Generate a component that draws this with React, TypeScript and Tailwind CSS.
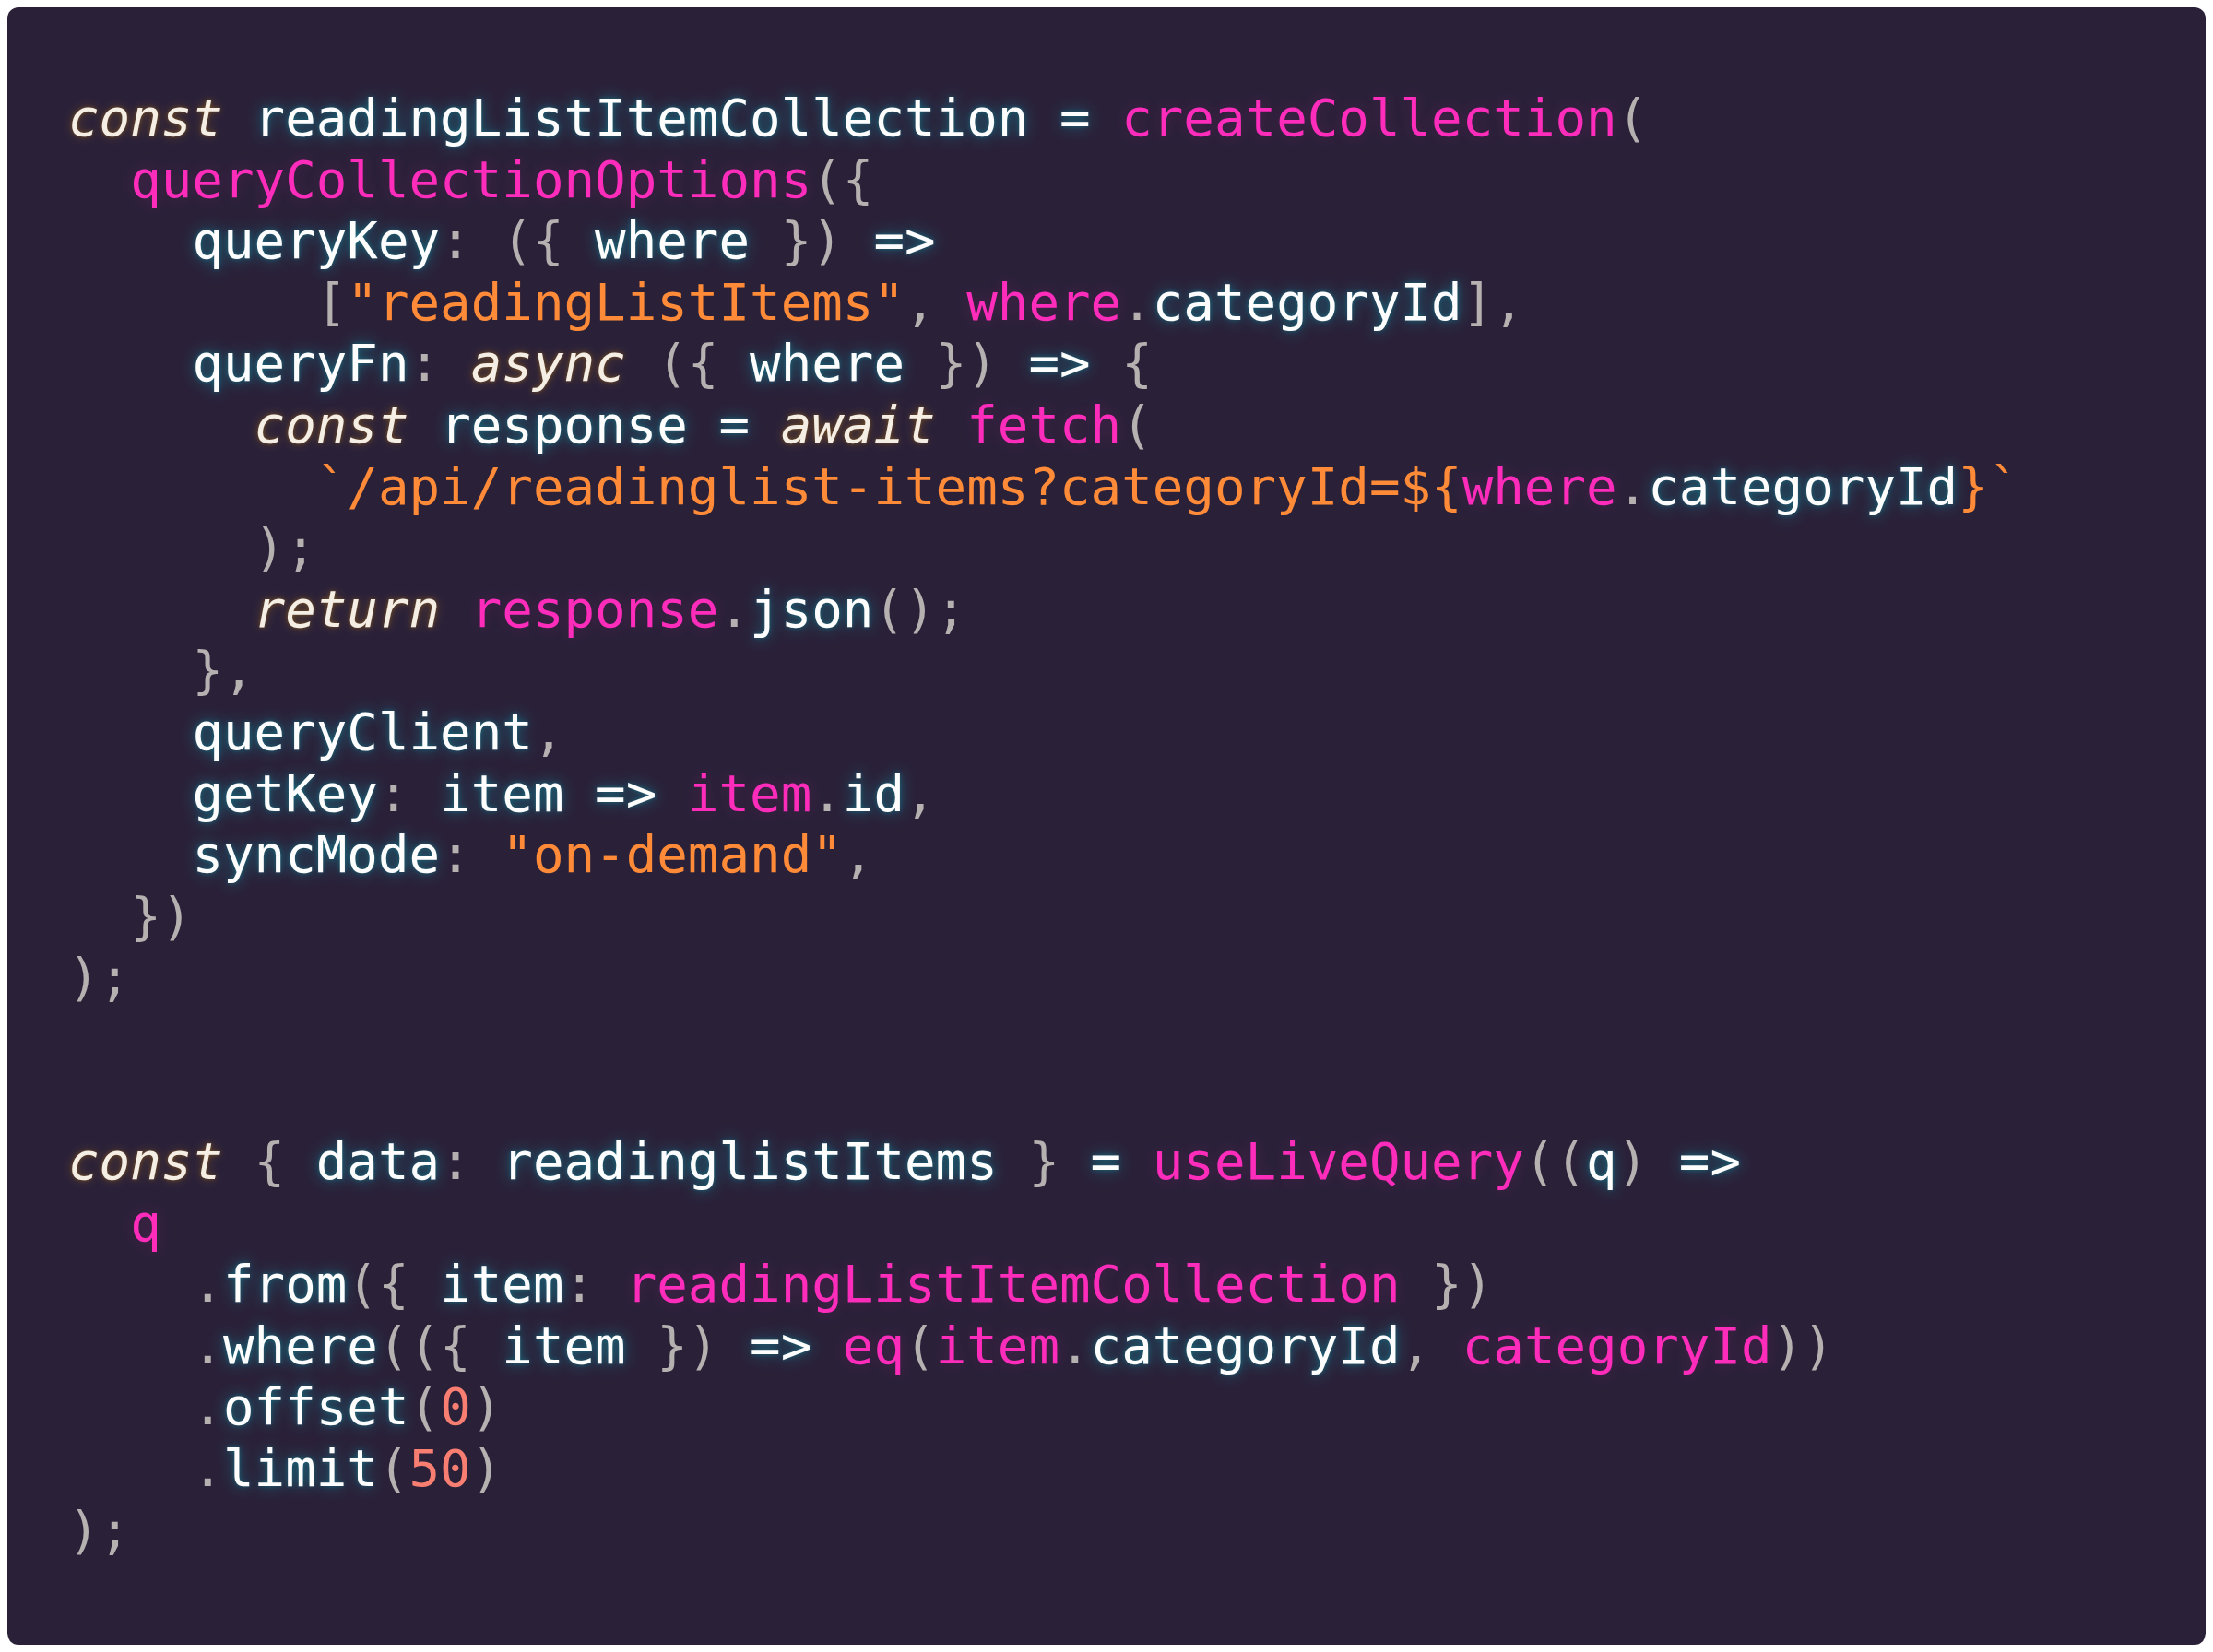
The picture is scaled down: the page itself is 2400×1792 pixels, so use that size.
type Kind = "k" | "v" | "f" | "s" | "p" | "n" | "_";
type Tok = [Kind, string];

const kindClass: Record<Kind, string> = {
  k: "italic text-[#f4eee4] [text-shadow:0_0_4px_rgba(243,159,5,0.3),0_0_12px_rgba(243,159,5,0.28)]",
  v: "text-[#fdfdfd] [text-shadow:0_0_5px_rgba(3,237,249,0.25),0_0_16px_rgba(3,237,249,0.4)]",
  f: "text-[#fe2cbb] [text-shadow:0_0_16px_rgba(254,44,187,0.18)]",
  s: "text-[#ff8b39]",
  p: "text-[#b6b1b1]",
  n: "text-[#f97e72]",
  _: "",
};

const sp = (n = 1): Tok => ["_", " ".repeat(n)];

const lines: Tok[][] = [
  [["k", "const"], sp(), ["v", "readingListItemCollection"], sp(), ["v", "="], sp(), ["f", "createCollection"], ["p", "("]],
  [sp(2), ["f", "queryCollectionOptions"], ["p", "({"]],
  [sp(4), ["v", "queryKey"], ["p", ":"], sp(), ["p", "({"], sp(), ["v", "where"], sp(), ["p", "})"], sp(), ["v", "=>"]],
  [sp(8), ["p", "["], ["s", '"readingListItems"'], ["p", ","], sp(), ["f", "where"], ["p", "."], ["v", "categoryId"], ["p", "],"]],
  [sp(4), ["v", "queryFn"], ["p", ":"], sp(), ["k", "async"], sp(), ["p", "({"], sp(), ["v", "where"], sp(), ["p", "})"], sp(), ["v", "=>"], sp(), ["p", "{"]],
  [sp(6), ["k", "const"], sp(), ["v", "response"], sp(), ["v", "="], sp(), ["k", "await"], sp(), ["f", "fetch"], ["p", "("]],
  [sp(8), ["s", "`/api/readinglist-items?categoryId=${"], ["f", "where"], ["p", "."], ["v", "categoryId"], ["s", "}`"]],
  [sp(6), ["p", ");"]],
  [sp(6), ["k", "return"], sp(), ["f", "response"], ["p", "."], ["v", "json"], ["p", "();"]],
  [sp(4), ["p", "},"]],
  [sp(4), ["v", "queryClient"], ["p", ","]],
  [sp(4), ["v", "getKey"], ["p", ":"], sp(), ["v", "item"], sp(), ["v", "=>"], sp(), ["f", "item"], ["p", "."], ["v", "id"], ["p", ","]],
  [sp(4), ["v", "syncMode"], ["p", ":"], sp(), ["s", '"on-demand"'], ["p", ","]],
  [sp(2), ["p", "})"]],
  [["p", ");"]],
  [],
  [],
  [["k", "const"], sp(), ["p", "{"], sp(), ["v", "data"], ["p", ":"], sp(), ["v", "readinglistItems"], sp(), ["p", "}"], sp(), ["v", "="], sp(), ["f", "useLiveQuery"], ["p", "(("], ["v", "q"], ["p", ")"], sp(), ["v", "=>"]],
  [sp(2), ["f", "q"]],
  [sp(4), ["p", "."], ["v", "from"], ["p", "({"], sp(), ["v", "item"], ["p", ":"], sp(), ["f", "readingListItemCollection"], sp(), ["p", "})"]],
  [sp(4), ["p", "."], ["v", "where"], ["p", "(({"], sp(), ["v", "item"], sp(), ["p", "})"], sp(), ["v", "=>"], sp(), ["f", "eq"], ["p", "("], ["f", "item"], ["p", "."], ["v", "categoryId"], ["p", ","], sp(), ["f", "categoryId"], ["p", "))"]],
  [sp(4), ["p", "."], ["v", "offset"], ["p", "("], ["n", "0"], ["p", ")"]],
  [sp(4), ["p", "."], ["v", "limit"], ["p", "("], ["n", "50"], ["p", ")"]],
  [["p", ");"]],
];

const App = () => {
  return (
    <div className="min-h-screen bg-white p-2">
      <div className="h-[1776px] rounded-[12px] bg-[#2a2139] pl-[66px] pt-[87px]">
        <pre className="font-['DejaVu_Sans_Mono',monospace] text-[55.8px] leading-[66.6px]">
          {lines.map((line, i) => (
            <div key={i} className="h-[66.6px] whitespace-pre">
              {line.map(([kind, text], j) => (
                <span key={j} className={kindClass[kind]}>
                  {text}
                </span>
              ))}
            </div>
          ))}
        </pre>
      </div>
    </div>
  );
};

export default App;
